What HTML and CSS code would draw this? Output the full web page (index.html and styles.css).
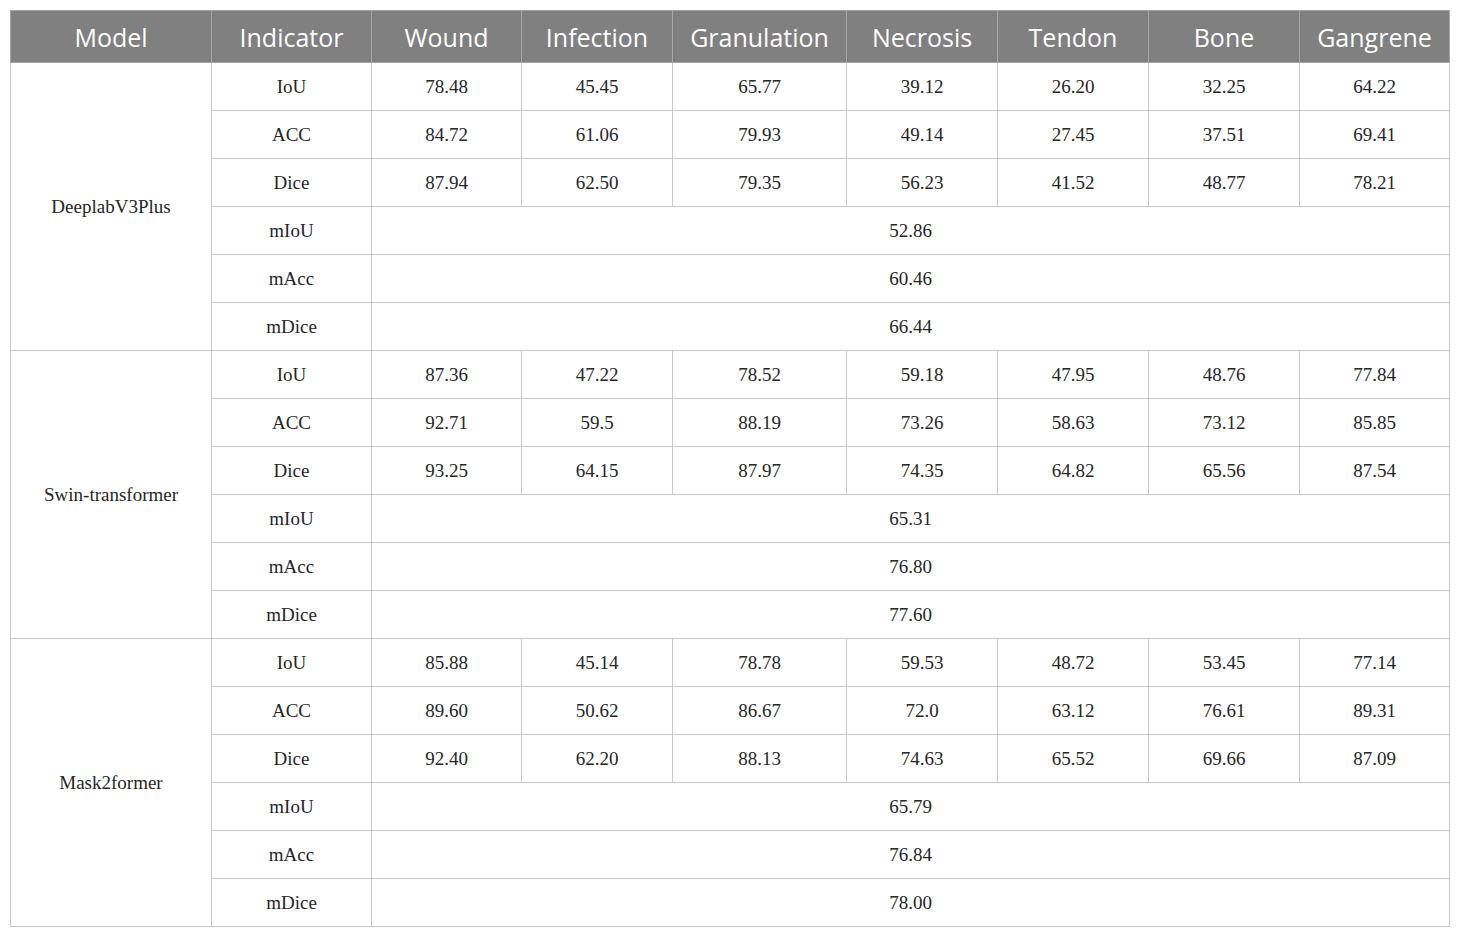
FILE: index.html
```html
<!DOCTYPE html>
<html>
<head>
<meta charset="utf-8">
<link rel="stylesheet" href="styles.css">
</head>
<body>
<table class="results">
  <colgroup>
    <col class="c-model"><col class="c-ind"><col class="c-w1"><col class="c-w2"><col class="c-w3"><col class="c-w4"><col class="c-w5"><col class="c-w6"><col class="c-w7">
  </colgroup>
  <thead>
    <tr><th>Model</th><th>Indicator</th><th>Wound</th><th>Infection</th><th>Granulation</th><th>Necrosis</th><th>Tendon</th><th>Bone</th><th>Gangrene</th></tr>
  </thead>
  <tbody>
    <tr><td rowspan="6">DeeplabV3Plus</td><td>IoU</td><td>78.48</td><td>45.45</td><td>65.77</td><td>39.12</td><td>26.20</td><td>32.25</td><td>64.22</td></tr>
    <tr><td>ACC</td><td>84.72</td><td>61.06</td><td>79.93</td><td>49.14</td><td>27.45</td><td>37.51</td><td>69.41</td></tr>
    <tr><td>Dice</td><td>87.94</td><td>62.50</td><td>79.35</td><td>56.23</td><td>41.52</td><td>48.77</td><td>78.21</td></tr>
    <tr><td>mIoU</td><td colspan="7">52.86</td></tr>
    <tr><td>mAcc</td><td colspan="7">60.46</td></tr>
    <tr><td>mDice</td><td colspan="7">66.44</td></tr>
    <tr><td rowspan="6">Swin-transformer</td><td>IoU</td><td>87.36</td><td>47.22</td><td>78.52</td><td>59.18</td><td>47.95</td><td>48.76</td><td>77.84</td></tr>
    <tr><td>ACC</td><td>92.71</td><td>59.5</td><td>88.19</td><td>73.26</td><td>58.63</td><td>73.12</td><td>85.85</td></tr>
    <tr><td>Dice</td><td>93.25</td><td>64.15</td><td>87.97</td><td>74.35</td><td>64.82</td><td>65.56</td><td>87.54</td></tr>
    <tr><td>mIoU</td><td colspan="7">65.31</td></tr>
    <tr><td>mAcc</td><td colspan="7">76.80</td></tr>
    <tr><td>mDice</td><td colspan="7">77.60</td></tr>
    <tr><td rowspan="6">Mask2former</td><td>IoU</td><td>85.88</td><td>45.14</td><td>78.78</td><td>59.53</td><td>48.72</td><td>53.45</td><td>77.14</td></tr>
    <tr><td>ACC</td><td>89.60</td><td>50.62</td><td>86.67</td><td>72.0</td><td>63.12</td><td>76.61</td><td>89.31</td></tr>
    <tr><td>Dice</td><td>92.40</td><td>62.20</td><td>88.13</td><td>74.63</td><td>65.52</td><td>69.66</td><td>87.09</td></tr>
    <tr><td>mIoU</td><td colspan="7">65.79</td></tr>
    <tr><td>mAcc</td><td colspan="7">76.84</td></tr>
    <tr><td>mDice</td><td colspan="7">78.00</td></tr>
  </tbody>
</table>
</body>
</html>
```

FILE: styles.css
```css
html, body {
  margin: 0;
  padding: 0;
  background: #ffffff;
}
body {
  padding: 10px 0 0 10px;
}
.results {
  border-collapse: collapse;
  table-layout: fixed;
  width: 1439px;
  font-family: "Liberation Serif", "Times New Roman", serif;
  font-size: 19px;
  color: #262626;
}
.c-model { width: 201px; }
.c-ind { width: 160px; }
.c-w1 { width: 150px; }
.c-w2 { width: 151px; }
.c-w3 { width: 174px; }
.c-w4 { width: 151px; }
.c-w5 { width: 151px; }
.c-w6 { width: 151px; }
.c-w7 { width: 150px; }
.results th {
  height: 51px;
  background: #808080;
  color: #ffffff;
  font-family: "Open Sans", "Liberation Sans", sans-serif;
  font-weight: 400;
  font-size: 25px;
  text-align: center;
  vertical-align: middle;
  border: 1px solid #a6a6a6;
  padding: 0;
}
.results td {
  height: 47px;
  border: 1px solid #c9c9c9;
  text-align: center;
  vertical-align: middle;
  padding: 0;
}
```
